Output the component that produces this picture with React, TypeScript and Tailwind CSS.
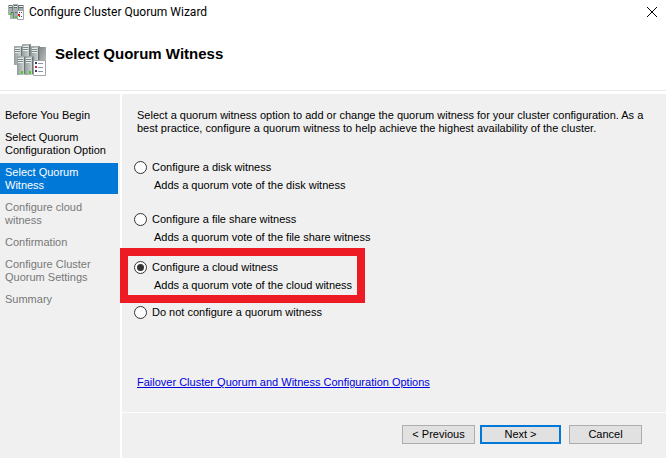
import React from 'react';

interface Step {
  label: string;
  state: 'done' | 'current' | 'pending';
}

interface WitnessOption {
  id: string;
  label: string;
  description?: string;
  highlighted?: boolean;
}

const steps: Step[] = [
  { label: 'Before You Begin', state: 'done' },
  { label: 'Select Quorum Configuration Option', state: 'done' },
  { label: 'Select Quorum Witness', state: 'current' },
  { label: 'Configure cloud witness', state: 'pending' },
  { label: 'Confirmation', state: 'pending' },
  { label: 'Configure Cluster Quorum Settings', state: 'pending' },
  { label: 'Summary', state: 'pending' },
];

const options: WitnessOption[] = [
  { id: 'disk', label: 'Configure a disk witness', description: 'Adds a quorum vote of the disk witness' },
  { id: 'file', label: 'Configure a file share witness', description: 'Adds a quorum vote of the file share witness' },
  {
    id: 'cloud',
    label: 'Configure a cloud witness',
    description: 'Adds a quorum vote of the cloud witness',
    highlighted: true,
  },
  { id: 'none', label: 'Do not configure a quorum witness' },
];

const stepColors = {
  done: 'text-black',
  current: 'bg-[#0078d7] text-white',
  pending: 'text-[#787878]',
};

const Tower = ({ x, y }: { x: number; y: number }) => (
  <g transform={`translate(${x} ${y})`}>
    <path d="M0 1 L1 0 H9 V17 L7 19 H0 Z" fill="#858c8c" />
    <path d="M0 1 L1 0 H9 L7 1 Z" fill="#a3aaaa" />
    <path d="M0 1 H7 V19 H0 Z" fill="url(#face)" />
    <path d="M1 2 H6 V7 H1 Z" fill="#e9eded" />
    <path d="M1 3.5 H6 M1 5.5 H6" stroke="#7d8686" />
    <path d="M7.5 1 V18" stroke="#6c7474" />
  </g>
);

const ClusterIcon = ({ className }: { className: string }) => (
  <svg viewBox="0 0 32 32" className={className} aria-hidden="true">
    <defs>
      <linearGradient id="shade" x1="0" y1="0" x2="1" y2="1">
        <stop offset="0" stopColor="#7f8484" />
        <stop offset="1" stopColor="#b9bdbd" />
      </linearGradient>
      <linearGradient id="face" x1="0" y1="0" x2="1" y2="0">
        <stop offset="0" stopColor="#949d9d" />
        <stop offset="1" stopColor="#ccd2d2" />
      </linearGradient>
    </defs>
    <path d="M25 3 H32 V17 H25 Z" fill="url(#shade)" />
    <Tower x={0} y={2} />
    <Tower x={8} y={0} />
    <Tower x={17} y={2} />
    <Tower x={3} y={12} />
    <Tower x={11} y={12} />
    <path d="M7 27 H9 V30 H7 Z M15 27 H17 V30 H15 Z" fill="#45d321" />
    <path d="M19.5 16.5 H31.5 V31.5 H19.5 Z" fill="#fff" stroke="#a2a6a8" />
    <path d="M21 18 H23 V20 H21 Z M21 26 H23 V28 H21 Z" fill="#39415e" />
    <path d="M21 22 H23 V24 H21 Z" fill="#e01f2d" />
    <path d="M24 19.5 H29 M24 23.5 H29 M24 27.5 H29" stroke="#8b91a8" />
  </svg>
);

// title bar size, drawn on its own 16px grid
const SmallClusterIcon = ({ className }: { className: string }) => (
  <svg viewBox="0 0 16 16" className={className} aria-hidden="true">
    <path d="M0 1 H5 V11 H0 Z M5 0 H10 V10 H5 Z M11 1 H16 V8 H11 Z M2 7 H6 V15 H2 Z M6 7 H10 V15 H6 Z" fill="#a7b0b0" />
    <path d="M1 1.5 H4 M6 1.5 H9 M11 1.5 H15 M1 3.5 H4 M6 3.5 H9 M11 3.5 H15 M3 8.5 H5 M7 8.5 H9" stroke="#5f6868" />
    <path d="M1 2.5 H4 M6 2.5 H9 M11 2.5 H15" stroke="#eef2f2" />
    <path d="M4.5 2 V7 M10.5 1 V7 M5.5 8 V14" stroke="#747c7c" />
    <path d="M2 9 H4 V11 H2 Z M7 12 H9 V14 H7 Z" fill="#45d321" />
    <path d="M9.5 6.5 H15.5 V15.5 H9.5 Z" fill="#fff" stroke="#a2a6a8" />
    <path d="M11 8 H12 V9 H11 Z M11 12 H12 V13 H11 Z M13 8 H14 V9 H13 Z M13 12 H14 V13 H13 Z" fill="#39415e" />
    <path d="M10 10 H12 V12 H10 Z" fill="#e01f2d" />
  </svg>
);

const WitnessRow = ({ option }: { option: WitnessOption }) => (
  <div className={option.highlighted ? 'relative -mt-1 mb-[-4px] h-[49px]' : 'h-[52px]'}>
    <label className="flex h-4 items-center gap-[5px]">
      <input
        type="radio"
        name="witness"
        value={option.id}
        defaultChecked={option.id === 'cloud'}
        aria-describedby={option.description ? `${option.id}-description` : undefined}
        className="grid size-[13px] appearance-none place-content-center rounded-full border border-[#333] bg-white before:size-[7px] before:rounded-full checked:before:bg-[#333]"
      />
      {option.label}
    </label>
    {option.description && (
      <p id={`${option.id}-description`} className="mt-1 pl-5 leading-[13px]">
        {option.description}
      </p>
    )}
    {option.highlighted && (
      <div className="pointer-events-none absolute -top-[11px] -left-[14px] h-[55px] w-[245px] border-8 border-[#ed1c24]" />
    )}
  </div>
);

const App = () => {
  return (
    <div className="flex min-h-screen flex-col bg-[#f0f0f0] font-['Liberation_Sans',Arial,sans-serif] text-[11px] leading-[13px] text-black">
      <header className="border-b-[3px] border-white bg-white">
        <div className="flex h-6 items-center pr-2 pl-2">
          <SmallClusterIcon className="size-4" />
          <span className="pl-[5px] font-[Roboto,sans-serif] text-xs">Configure Cluster Quorum Wizard</span>
          <button type="button" aria-label="Close" className="ml-auto p-px">
            <svg viewBox="0 0 10 10" className="size-[10px]" fill="none" stroke="#000">
              <path d="M0 0 L10 10 M10 0 L0 10" />
            </svg>
          </button>
        </div>
        <div className="flex h-[67px] items-start gap-[9px] border-b border-[#e9e9e9] pl-[14px]">
          <ClusterIcon className="mt-5 size-8" />
          <h1 className="mt-5 text-[15px] leading-5 font-bold">Select Quorum Witness</h1>
        </div>
      </header>

      <div className="flex flex-1">
        <nav className="w-[120px] shrink-0 pt-3 pr-0.5">
          <ol className="flex flex-col gap-1">
            {steps.map((step) => (
              <li key={step.label} className={`pt-[3px] pr-2 pb-0.5 pl-[5px] ${stepColors[step.state]}`}>
                {step.label}
              </li>
            ))}
          </ol>
        </nav>

        <div className="flex flex-1 flex-col border-l-2 border-white">
          <main className="flex-1 pt-[15px] pr-4 pl-[15px]">
            <p>
              Select a quorum witness option to add or change the quorum witness for your cluster configuration. As a
              best practice, configure a quorum witness to help achieve the highest availability of the cluster.
            </p>
            <fieldset className="mt-6 -ml-[3px]">
              {options.map((option) => (
                <WitnessRow key={option.id} option={option} />
              ))}
            </fieldset>
            <a href="#options" className="mt-5 inline-block text-[#0000e0] underline">
              Failover Cluster Quorum and Witness Configuration Options
            </a>
          </main>

          <footer className="flex h-[46px] items-start border-t border-white pt-3 pl-[280px]">
            <button type="button" className="h-[19px] w-[73px] border border-[#adadad] bg-[#e1e1e1]">
              &lt; Previous
            </button>
            <button type="button" className="ml-[5px] h-[19px] w-[81px] border-2 border-[#0078d7] bg-[#e1e1e1]">
              Next &gt;
            </button>
            <button type="button" className="ml-2 h-[19px] w-[73px] border border-[#adadad] bg-[#e1e1e1]">
              Cancel
            </button>
          </footer>
        </div>
      </div>
    </div>
  );
};

export default App;
